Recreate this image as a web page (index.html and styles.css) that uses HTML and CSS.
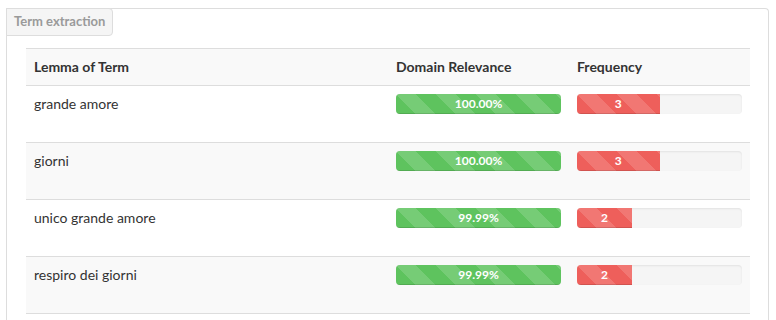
FILE: index.html
```html
<!DOCTYPE html>
<html>
<head>
<meta charset="utf-8">
<link rel="stylesheet" href="styles.css">
</head>
<body>
<div class="panel">
  <div class="tab">Term extraction</div>
  <table class="terms">
    <thead>
      <tr><th class="c1">Lemma of Term</th><th class="c2">Domain Relevance</th><th class="c3">Frequency</th></tr>
    </thead>
    <tbody>
      <tr>
        <td>grande amore</td>
        <td><div class="progress"><div class="bar bar-success" style="width:100%">100.00%</div></div></td>
        <td><div class="progress"><div class="bar bar-danger" style="width:50%">3</div></div></td>
      </tr>
      <tr>
        <td>giorni</td>
        <td><div class="progress"><div class="bar bar-success" style="width:100%">100.00%</div></div></td>
        <td><div class="progress"><div class="bar bar-danger" style="width:50%">3</div></div></td>
      </tr>
      <tr>
        <td>unico grande amore</td>
        <td><div class="progress"><div class="bar bar-success" style="width:100%">99.99%</div></div></td>
        <td><div class="progress"><div class="bar bar-danger" style="width:33.33%">2</div></div></td>
      </tr>
      <tr>
        <td>respiro dei giorni</td>
        <td><div class="progress"><div class="bar bar-success" style="width:100%">99.99%</div></div></td>
        <td><div class="progress"><div class="bar bar-danger" style="width:33.33%">2</div></div></td>
      </tr>
    </tbody>
  </table>
</div>
</body>
</html>
```
FILE: styles.css
```css
html, body {
  margin: 0;
  padding: 0;
  background: #fff;
}
body {
  padding: 8px 7px 0 6px;
  font-family: "Source Sans Pro", Lato, "Liberation Sans", sans-serif;
  font-size: 14px;
  line-height: 20px;
  color: #333;
}
.panel {
  border: 1px solid #ddd;
  border-bottom: 0;
  border-radius: 0 4px 0 0;
  height: 312px;
  box-sizing: border-box;
}
.tab {
  display: inline-block;
  margin: -1px 0 0 -1px;
  padding: 4px 7px 5px 7px;
  background: #f5f5f5;
  border: 1px solid #ddd;
  border-radius: 0 4px 4px 0;
  color: #9a9a9a;
  font-weight: bold;
  font-size: 13px;
  line-height: 17px;
}
.terms {
  margin: 12px 18px 0 19px;
  width: calc(100% - 37px);
  border-collapse: collapse;
  border-spacing: 0;
}
.terms th, .terms td {
  padding: 8px;
  text-align: left;
  vertical-align: top;
  border-top: 1px solid #ddd;
}
.terms th {
  font-weight: bold;
  background: #f9f9f9;
  border-bottom: 1px solid #ddd;
  padding-bottom: 8px;
}
.terms tbody tr:nth-child(even) td {
  background: #f9f9f9;
}
.terms tbody tr:last-child td {
  border-bottom: 1px solid #ddd;
}
.c1 { width: 346px; }
.c2 { width: 165px; }
.c3 { width: 165px; }
.progress {
  height: 20px;
  margin-bottom: 20px;
  background: #f5f5f5;
  border-radius: 4px;
  overflow: hidden;
  box-shadow: inset 0 1px 2px rgba(0,0,0,0.08);
}
.bar {
  height: 20px;
  float: left;
  color: #fff;
  font-size: 12px;
  font-weight: bold;
  line-height: 20px;
  text-align: center;
  box-sizing: border-box;
  background-size: 40px 40px;
  background-image: linear-gradient(45deg, rgba(255,255,255,0.15) 25%, transparent 25%, transparent 50%, rgba(255,255,255,0.15) 50%, rgba(255,255,255,0.15) 75%, transparent 75%, transparent);
  box-shadow: inset 0 -1px 0 rgba(0,0,0,0.12);
}
.bar-success { background-color: #5ec35e; }
.bar-danger { background-color: #ee5f5b; }
```
